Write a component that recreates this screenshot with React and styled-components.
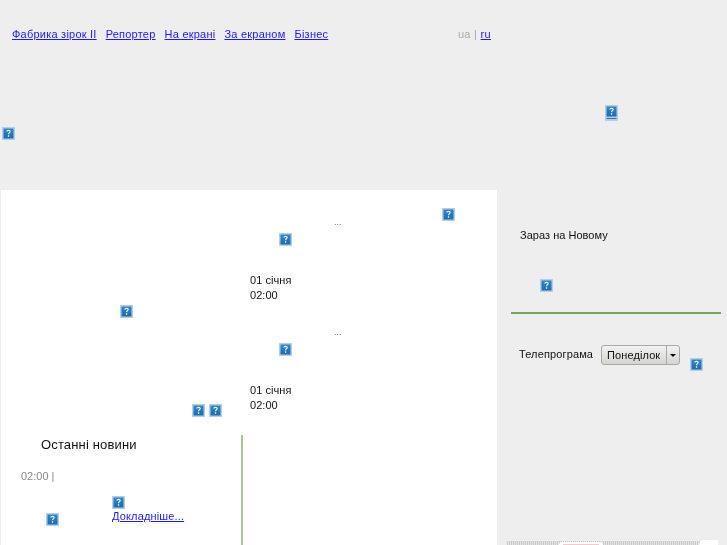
import React from "react";
import styled, { createGlobalStyle } from "styled-components";

const GlobalStyle = createGlobalStyle`
  html, body {
    margin: 0;
    padding: 0;
    height: 545px;
    overflow: hidden;
    background: #eeeeee;
    font-family: "Liberation Sans", Arial, sans-serif;
    font-size: 11px;
    color: #111;
  }
  a { color: #1a1aff; }
`;

const Page = styled.div`
  width: 727px;
  height: 545px;
  overflow: hidden;
  will-change: transform;
`;

const Header = styled.header`
  height: 190px;
  padding-top: 27px;
  box-sizing: border-box;
`;

const TopBar = styled.div`
  width: 491px;
  height: 14px;
  padding-left: 12px;
  box-sizing: border-box;
  display: flex;
  justify-content: space-between;
  align-items: center;
`;

const Nav = styled.nav`
  display: flex;
  gap: 9px;
  letter-spacing: 0.23px;
`;

const Lang = styled.div`
  color: #aaa;
  letter-spacing: 0.3px;
`;

const BannerIcon = styled.div`
  height: 80px;
  padding-left: 605px;
  display: flex;
  align-items: flex-end;
`;

const LeftIcon = styled.div`
  padding: 6px 0 0 2px;
`;

const Main = styled.main`
  display: grid;
  grid-template-columns: 496px 1fr;
  padding-left: 1px;
  height: 355px;
`;

const Content = styled.section`
  background: #fff;
  height: 355px;
  overflow: hidden;
`;

const TopNews = styled.div`
  display: grid;
  grid-template-columns: 249px 1fr;
  height: 245px;
`;

const Side = styled.div`
  display: flex;
  flex-direction: column;
  justify-content: space-between;
  height: 227px;
  padding-top: 115px;
  box-sizing: border-box;
`;

const SideIconTop = styled.div`
  padding-left: 119px;
`;

const SideIconPair = styled.div`
  display: flex;
  gap: 4px;
  padding-left: 191px;
`;

const Story = styled.article`
  height: 110px;
  position: relative;
`;

const Dots = styled.div`
  padding: 27px 0 0 84px;
  height: 11px;
  font-size: 9px;
  line-height: 11px;
  color: #666;
`;

const StoryIcon = styled.div`
  padding: 5px 0 0 29px;
  height: 13px;
`;

const DateBlock = styled.div`
  padding-top: 27px;
  font-size: 11px;
  line-height: 15px;
  letter-spacing: 0.05px;
  color: #111;
`;

const CornerIcon = styled.div`
  position: absolute;
  left: 192px;
  top: 18px;
`;

const Latest = styled.div`
  display: grid;
  grid-template-columns: 242px 1fr;
`;

const LatestCol = styled.div`
  height: 110px;
  border-right: 2px solid #a9c48f;
  box-sizing: border-box;
`;

const LatestTitle = styled.h2`
  margin: 0;
  padding: 2px 0 0 40px;
  font-size: 13px;
  line-height: 16px;
  font-weight: normal;
  letter-spacing: 0.15px;
  color: #111;
`;

const Time = styled.div`
  padding: 16px 0 0 20px;
  font-size: 11px;
  line-height: 14px;
  color: #888;
`;

const NewsItem = styled.div`
  display: flex;
  align-items: flex-start;
  padding: 13px 0 0 45px;
`;

const NewsThumb = styled.div`
  padding-top: 17px;
`;

const ItemBody = styled.div`
  margin-left: 53px;
  display: flex;
  flex-direction: column;
  gap: 1px;
  a {
    letter-spacing: 0.15px;
    line-height: 13px;
  }
`;

const Aside = styled.aside`
  padding-top: 38px;
`;

const NowTitle = styled.div`
  padding-left: 23px;
  line-height: 14px;
  letter-spacing: 0.03px;
  color: #111;
`;

const NowIcon = styled.div`
  padding: 37px 0 0 43px;
  height: 13px;
`;

const Divider = styled.hr`
  margin: 20px 6px 0 14px;
  border: 0;
  height: 2px;
  background: #75a55e;
`;

const ProgramRow = styled.div`
  display: flex;
  padding: 31px 0 0 22px;
  align-items: flex-start;
`;

const ProgramLabel = styled.span`
  line-height: 18px;
  letter-spacing: 0.13px;
  color: #111;
`;

const DayPicker = styled.div`
  margin-left: 8px;
  width: 79px;
  height: 20px;
  box-sizing: border-box;
  border: 1px solid #a8a8a8;
  border-radius: 3px;
  background: linear-gradient(#f2f2f0, #d4d4d0);
  display: flex;
  align-items: center;
  color: #111;
  letter-spacing: 0.1px;
`;

const DayName = styled.span`
  flex: 1;
  padding-left: 5px;
  border-right: 1px solid #a8a8a8;
  line-height: 18px;
`;

const Arrow = styled.span`
  width: 12px;
  display: flex;
  justify-content: center;
  &::before {
    content: "";
    border: 3px solid transparent;
    border-top: 3px solid #000;
    border-bottom: 0;
  }
`;

const ProgramIcon = styled.div`
  margin: 13px 0 0 10px;
`;

const Strip = styled.div`
  margin: 170px 0 0 10px;
  width: 201px;
  height: 4px;
  position: relative;
  background: repeating-linear-gradient(90deg, #c8c8c8 0 1px, #e6e6e6 1px 2px);
`;

const Pill = styled.div`
  position: absolute;
  left: 52px;
  top: 1px;
  width: 44px;
  height: 3px;
  background: #fff;
  border-radius: 3px 3px 0 0;
  &::after {
    content: "";
    display: block;
    margin: 2px 4px 0;
    height: 1px;
    background: #f3c9c9;
  }
`;

const StripEnd = styled.div`
  position: absolute;
  right: -10px;
  top: -1px;
  width: 19px;
  height: 5px;
  background: #fff;
  border-radius: 8px 0 0 0;
`;

const Broken = ({ linked }) => (
  <svg width="13" height={linked ? 16 : 13} viewBox={`0 0 13 ${linked ? 16 : 13}`} style={{ display: "block" }}>
    <defs>
      <linearGradient id="brokenFill" x1="0" y1="0" x2="0" y2="1">
        <stop offset="0" stopColor="#2f86c8" />
        <stop offset="1" stopColor="#1c6cae" />
      </linearGradient>
    </defs>
    <rect x="0" y="0" width="13" height={linked ? 16 : 13} fill="#b4cde8" />
    <rect x="1.5" y="1.5" width="10" height="10" fill="url(#brokenFill)" />
    <path d="M4.8 4.6c0-1.6 3.4-1.6 3.4 0 0 1.2-1.7 1.2-1.7 2.6" fill="none" stroke="#e8f2fa" strokeWidth="1.2" />
    <rect x="5.9" y="8.3" width="1.3" height="1.4" fill="#fff" />
    {linked && <rect x="1.5" y="13" width="10" height="1" fill="#3f6fb5" />}
  </svg>
);

const App = () => (
  <Page>
    <GlobalStyle />
    <Header>
      <TopBar>
        <Nav>
          <a href="#">Фабрика зірок II</a>
          <a href="#">Репортер</a>
          <a href="#">На екрані</a>
          <a href="#">За екраном</a>
          <a href="#">Бізнес</a>
        </Nav>
        <Lang>
          ua | <a href="#">ru</a>
        </Lang>
      </TopBar>
      <BannerIcon>
        <Broken linked />
      </BannerIcon>
      <LeftIcon>
        <Broken />
      </LeftIcon>
    </Header>
    <Main>
      <Content>
        <TopNews>
          <Side>
            <SideIconTop>
              <Broken />
            </SideIconTop>
            <SideIconPair>
              <Broken />
              <Broken />
            </SideIconPair>
          </Side>
          <div>
            <Story>
              <CornerIcon>
                <Broken />
              </CornerIcon>
              <Dots>...</Dots>
              <StoryIcon>
                <Broken />
              </StoryIcon>
              <DateBlock>
                01 січня
                <br />
                02:00
              </DateBlock>
            </Story>
            <Story>
              <Dots>...</Dots>
              <StoryIcon>
                <Broken />
              </StoryIcon>
              <DateBlock>
                01 січня
                <br />
                02:00
              </DateBlock>
            </Story>
          </div>
        </TopNews>
        <Latest>
          <LatestCol>
            <LatestTitle>Останні новини</LatestTitle>
            <Time>02:00 |</Time>
            <NewsItem>
              <NewsThumb>
                <Broken />
              </NewsThumb>
              <ItemBody>
                <Broken />
                <a href="#">Докладніше...</a>
              </ItemBody>
            </NewsItem>
          </LatestCol>
        </Latest>
      </Content>
      <Aside>
        <NowTitle>Зараз на Новому</NowTitle>
        <NowIcon>
          <Broken />
        </NowIcon>
        <Divider />
        <ProgramRow>
          <ProgramLabel>Телепрограма</ProgramLabel>
          <DayPicker>
            <DayName>Понеділок</DayName>
            <Arrow />
          </DayPicker>
          <ProgramIcon>
            <Broken />
          </ProgramIcon>
        </ProgramRow>
        <Strip>
          <Pill />
          <StripEnd />
        </Strip>
      </Aside>
    </Main>
  </Page>
);

export default App;
